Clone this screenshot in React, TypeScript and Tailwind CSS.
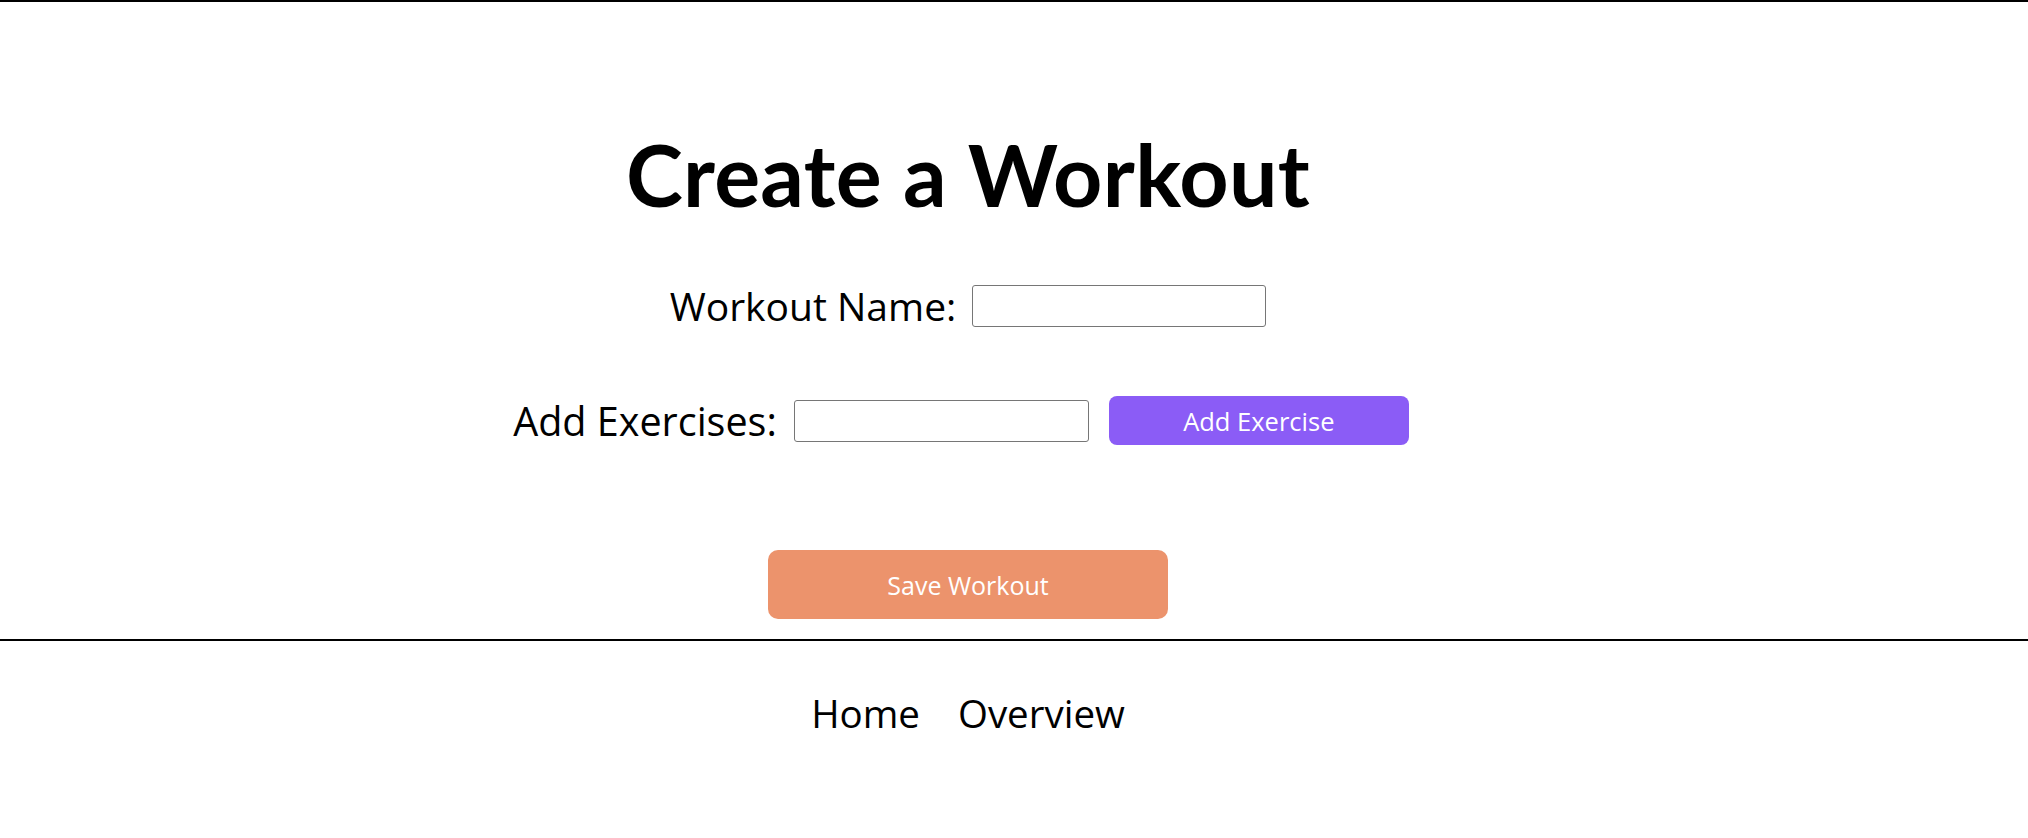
import React from "react";

export default function App() {
  return (
    <div
      className="min-h-screen bg-white text-black"
      style={{ fontFamily: "'Open Sans', Lato, sans-serif" }}
    >
      <main className="border-t-2 border-black pr-[92px] flex flex-col items-center">
        <h1
          className="mt-[122px] text-[86px] leading-[100px] font-bold tracking-[0.3px]"
          style={{ fontFamily: "Lato, 'Open Sans', sans-serif" }}
        >
          Create a Workout
        </h1>
        <div className="mt-[61px] flex items-center gap-[16px]">
          <label className="text-[39px] leading-[42px]">Workout Name:</label>
          <input
            type="text"
            className="w-[294px] h-[42px] border border-[#767676] rounded-[3px] bg-white"
          />
        </div>
        <div className="mt-[69px] mr-[14px] flex items-center">
          <label className="text-[39.5px] leading-[42px]">Add Exercises:</label>
          <input
            type="text"
            className="ml-[17px] w-[295px] h-[42px] border border-[#767676] rounded-[3px] bg-white"
          />
          <button className="ml-[20px] w-[300px] h-[49px] rounded-[8px] bg-[#8b5cf6] text-white text-[25.5px] leading-[30px]">
            Add Exercise
          </button>
        </div>
        <button className="mt-[105px] mb-[20px] w-[400px] h-[69px] rounded-[10px] bg-[#ec936c] text-white text-[25px] leading-[32px]">
          Save Workout
        </button>
      </main>
      <footer className="border-t-2 border-black pr-[92px] flex justify-center gap-[38px] pt-[50px]">
        <a className="text-[38.5px] leading-[44px]">Home</a>
        <a className="text-[38.5px] leading-[44px]">Overview</a>
      </footer>
    </div>
  );
}
